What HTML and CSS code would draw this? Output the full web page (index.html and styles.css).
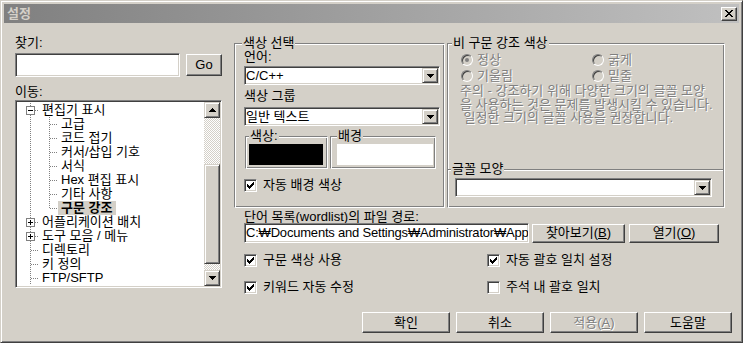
FILE: index.html
```html
<!DOCTYPE html>
<html lang="ko">
    <head>
        <meta charset="UTF-8">
        <meta name="viewport" content="width=device-width, initial-scale=1.0">
        <title>설정</title>
        <link rel="stylesheet" href="styles.css">
    </head>
    <body>
        <div class="window">

            <div class="titlebar">
                <span class="title">설정</span>
                <span class="btn-close">
                    <svg width="8" height="7" viewBox="0 0 8 7"><path d="M0 0h2v1H0z M6 0h2v1H6z M1 1h2v1H1z M5 1h2v1H5z M2 2h4v1H2z M3 3h2v1H3z M2 4h4v1H2z M1 5h2v1H1z M5 5h2v1H5z M0 6h2v1H0z M6 6h2v1H6z"/></svg>
                </span>
            </div>

            <div class="client">
                <div class="main">

                    <div class="nav">
                        <div class="caption">찾기:</div>
                        <div class="search-row">
                            <div class="edit search-box"></div>
                            <button class="btn go">Go</button>
                        </div>
                        <div class="caption nav-caption">이동:</div>
                        <div class="tree">
                            <div class="tree-items">
                                <div class="row">
                                    <span class="conn"><svg class="expander" width="9" height="9" viewBox="0 0 9 9"><rect x=".5" y=".5" width="8" height="8" fill="#fff" stroke="#808080"/><path d="M2 4h5v1H2z"/></svg></span>
                                    <span class="label">편집기 표시</span>
                                </div>
                                <div class="row"><span class="pipe"></span><span class="conn"></span><span class="label">고급</span></div>
                                <div class="row"><span class="pipe"></span><span class="conn"></span><span class="label">코드 접기</span></div>
                                <div class="row"><span class="pipe"></span><span class="conn"></span><span class="label">커서/삽입 기호</span></div>
                                <div class="row"><span class="pipe"></span><span class="conn"></span><span class="label">서식</span></div>
                                <div class="row"><span class="pipe"></span><span class="conn"></span><span class="label">Hex 편집 표시</span></div>
                                <div class="row"><span class="pipe"></span><span class="conn"></span><span class="label">기타 사항</span></div>
                                <div class="row"><span class="pipe"></span><span class="conn last"></span><span class="label selected">구문 강조</span></div>
                                <div class="row">
                                    <span class="conn"><svg class="expander" width="9" height="9" viewBox="0 0 9 9"><rect x=".5" y=".5" width="8" height="8" fill="#fff" stroke="#808080"/><path d="M2 4h5v1H2z M4 2h1v5H4z"/></svg></span>
                                    <span class="label">어플리케이션 배치</span>
                                </div>
                                <div class="row">
                                    <span class="conn"><svg class="expander" width="9" height="9" viewBox="0 0 9 9"><rect x=".5" y=".5" width="8" height="8" fill="#fff" stroke="#808080"/><path d="M2 4h5v1H2z M4 2h1v5H4z"/></svg></span>
                                    <span class="label">도구 모음 / 메뉴</span>
                                </div>
                                <div class="row"><span class="conn"></span><span class="label">디렉토리</span></div>
                                <div class="row"><span class="conn"></span><span class="label">키 정의</span></div>
                                <div class="row"><span class="conn"></span><span class="label">FTP/SFTP</span></div>
                            </div>
                            <div class="vscroll">
                                <span class="sb-btn"><svg width="7" height="4" viewBox="0 0 7 4"><path d="M3 0H4V1H5V2H6V3H7V4H0V3H1V2H2V1H3Z"/></svg></span>
                                <span class="sb-track top"></span>
                                <span class="sb-thumb"></span>
                                <span class="sb-track"></span>
                                <span class="sb-btn"><svg width="7" height="4" viewBox="0 0 7 4"><path d="M0 0H7V1H6V2H5V3H4V4H3V3H2V2H1V1H0Z"/></svg></span>
                            </div>
                        </div>
                    </div>

                    <div class="settings">
                        <div class="groups">
                            <fieldset class="group color-group">
                                <legend>색상 선택</legend>
                                <div class="caption">언어:</div>
                                <div class="combo lang">
                                    <span class="combo-text">C/C++</span>
                                    <span class="drop"><svg width="7" height="4" viewBox="0 0 7 4"><path d="M0 0H7V1H6V2H5V3H4V4H3V3H2V2H1V1H0Z"/></svg></span>
                                </div>
                                <div class="caption group-caption">색상 그룹</div>
                                <div class="combo part">
                                    <span class="combo-text">일반 텍스트</span>
                                    <span class="drop"><svg width="7" height="4" viewBox="0 0 7 4"><path d="M0 0H7V1H6V2H5V3H4V4H3V3H2V2H1V1H0Z"/></svg></span>
                                </div>
                                <div class="swatches">
                                    <fieldset class="group mini fore">
                                        <legend>색상:</legend>
                                        <div class="swatch black"></div>
                                    </fieldset>
                                    <fieldset class="group mini back">
                                        <legend>배경</legend>
                                        <div class="swatch white"></div>
                                    </fieldset>
                                </div>
                                <div class="check-item auto-bg"><span class="checkbox checked"></span>자동 배경 색상</div>
                            </fieldset>

                            <fieldset class="group style-group">
                                <legend>비 구문 강조 색상</legend>
                                <div class="radios">
                                    <div class="radio-item"><span class="radio on"></span>정상</div>
                                    <div class="radio-item"><span class="radio"></span>굵게</div>
                                    <div class="radio-item"><span class="radio"></span>기울림</div>
                                    <div class="radio-item"><span class="radio"></span>밑줄</div>
                                </div>
                                <p class="note">주의 - 강조하기 위해 다양한 크기의 글꼴 모양<br>을 사용하는 것은 문제를 발생시킬 수 있습니다.<br>&nbsp;일정한 크기의 글꼴 사용을 권장합니다.</p>
                                <fieldset class="group font-group">
                                    <legend>글꼴 모양</legend>
                                    <div class="combo font">
                                        <span class="combo-text"></span>
                                        <span class="drop"><svg width="7" height="4" viewBox="0 0 7 4"><path d="M0 0H7V1H6V2H5V3H4V4H3V3H2V2H1V1H0Z"/></svg></span>
                                    </div>
                                </fieldset>
                            </fieldset>
                        </div>

                        <div class="wordlist">
                            <div class="path-caption">단어 목록(wordlist)의 파일 경로:</div>
                            <div class="path-row">
                                <div class="edit path-edit">C:₩Documents and Settings₩Administrator₩App</div>
                                <button class="btn browse">찾아보기(<u>B</u>)</button>
                                <button class="btn open">열기(<u>O</u>)</button>
                            </div>
                        </div>

                        <div class="options">
                            <div class="check-item"><span class="checkbox checked"></span>구문 색상 사용</div>
                            <div class="check-item"><span class="checkbox checked"></span>자동 괄호 일치 설정</div>
                            <div class="check-item"><span class="checkbox checked"></span>키워드 자동 수정</div>
                            <div class="check-item"><span class="checkbox"></span>주석 내 괄호 일치</div>
                        </div>
                    </div>

                </div>

                <div class="footer">
                    <button class="btn">확인</button>
                    <button class="btn">취소</button>
                    <button class="btn disabled">적용(<u>A</u>)</button>
                    <button class="btn">도움말</button>
                </div>
            </div>

        </div>
    </body>
</html>
```

FILE: styles.css
```css
* {
    box-sizing: border-box;
}

body {
    margin: 0;
    background: #d4d0c8;
    color: #000;
    font: 13px/14px "Liberation Sans", "Noto Sans CJK KR", sans-serif;
}

/* window frame */
.window {
    width: 743px;
    height: 343px;
    display: flex;
    flex-direction: column;
    padding: 3px;
    border: 1px solid;
    border-color: #d4d0c8 #404040 #404040 #d4d0c8;
    box-shadow: inset 1px 1px #fff, inset -1px -1px #808080;
    background: #d4d0c8;
}

.titlebar {
    flex: none;
    height: 19px;
    display: flex;
    align-items: center;
    justify-content: space-between;
    padding: 0 2px 0 3px;
    background: linear-gradient(to right, #808080, #c0c0c0);
}

.title {
    font-weight: bold;
    color: #d4d0c8;
}

.btn-close {
    width: 16px;
    height: 14px;
    display: flex;
    align-items: center;
    justify-content: center;
    background: #d4d0c8;
    border: 1px solid;
    border-color: #fff #404040 #404040 #fff;
    box-shadow: inset -1px -1px #808080;
}

.btn-close svg {
    display: block;
}

/* common controls */
.btn,
.sb-btn,
.sb-thumb,
.drop {
    background: #d4d0c8;
    border: 1px solid;
    border-color: #fff #404040 #404040 #fff;
    box-shadow: inset -1px -1px #808080;
}

.sb-btn,
.sb-thumb,
.drop {
    border-color: #d4d0c8 #404040 #404040 #d4d0c8;
    box-shadow: inset 1px 1px #fff, inset -1px -1px #808080;
}

.btn {
    margin: 0;
    padding: 0;
    font: inherit;
    color: #000;
}

.btn.disabled {
    color: #808080;
    text-shadow: 1px 1px #fff;
}

.edit,
.combo,
.tree,
.checkbox {
    background: #fff;
    border: 1px solid;
    border-color: #808080 #fff #fff #808080;
    box-shadow: inset 1px 1px #404040, inset -1px -1px #d4d0c8;
}

.group {
    margin: 0;
    min-width: 0;
    border: 1px solid;
    border-color: #808080 #fff #fff #808080;
    box-shadow: inset 1px 1px #fff, inset -1px -1px #808080;
}

.group > legend {
    padding: 0 1px;
    line-height: 14px;
    background: #d4d0c8;
}

.client {
    flex: 1;
    display: flex;
    flex-direction: column;
}

.main {
    display: flex;
    gap: 12px;
    padding: 13px 0 0 11px;
}

/* left navigation */
.nav {
    flex: none;
    width: 207px;
}

.search-row {
    display: flex;
    align-items: center;
    justify-content: space-between;
    margin-top: 3px;
}

.search-box {
    width: 165px;
    height: 24px;
}

.btn.go {
    width: 36px;
    height: 22px;
}

.nav-caption {
    margin-top: 8px;
}

.tree {
    display: flex;
    height: 188px;
    margin-top: 1px;
    padding: 1px;
}

.tree-items {
    flex: 1;
    overflow: hidden;
    padding-top: 1px;
}

.row {
    display: flex;
    height: 14px;
    white-space: nowrap;
}

.pipe {
    flex: none;
    width: 19px;
    background: repeating-linear-gradient(#808080 0 1px, transparent 1px 2px) 13px 0 / 1px 14px no-repeat;
}

.conn {
    flex: none;
    width: 22px;
    padding: 3px 0 0 9px;
    background:
        repeating-linear-gradient(to right, #808080 0 1px, transparent 1px 2px) 14px 7px / 8px 1px no-repeat,
        repeating-linear-gradient(#808080 0 1px, transparent 1px 2px) 13px 0 / 1px 14px no-repeat;
}

.conn.last {
    background-size: 8px 1px, 1px 8px;
}

.expander {
    display: block;
    shape-rendering: crispEdges;
}

.label {
    padding: 0 4px 0 3px;
}

.label.selected {
    font-weight: bold;
    background: #d4d0c8;
}

.vscroll {
    flex: none;
    width: 16px;
    display: flex;
    flex-direction: column;
}

.sb-btn {
    flex: none;
    height: 16px;
    display: flex;
    align-items: center;
    justify-content: center;
}

.sb-btn svg,
.drop svg {
    display: block;
}

.sb-track {
    flex: 1;
    background: repeating-conic-gradient(#fff 0 25%, #d4d0c8 0 50%) 0 0 / 2px 2px;
}

.sb-track.top {
    flex: none;
    height: 46px;
}

.sb-thumb {
    flex: none;
    height: 100px;
}

/* right side */
.settings {
    flex: none;
    width: 491px;
}

.groups {
    display: flex;
    gap: 2px;
    height: 172px;
}

.color-group {
    width: 211px;
    padding: 0 4px 0 9px;
}

.color-group > legend {
    margin-left: -2px;
}

.combo {
    display: flex;
    align-items: center;
    height: 19px;
    padding: 1px;
}

.combo-text {
    flex: 1;
    white-space: nowrap;
}

.drop {
    flex: none;
    width: 16px;
    height: 15px;
    display: flex;
    align-items: center;
    justify-content: center;
}

.combo.lang {
    margin-top: 2px;
}

.group-caption {
    margin-top: 4px;
}

.combo.part {
    margin-top: 4px;
}

.swatches {
    display: flex;
    gap: 2px;
    margin: 3px 0 0 1px;
}

.mini.fore {
    width: 83px;
    padding: 1px 4px 3px 3px;
}

.mini.back {
    width: 106px;
    padding: 1px 2px 3px 6px;
}

.swatch {
    height: 21px;
}

.swatch.black {
    background: #000;
}

.swatch.white {
    background: #fff;
}

.check-item {
    display: flex;
    align-items: center;
    height: 14px;
    white-space: nowrap;
}

.auto-bg {
    margin-top: 9px;
}

.checkbox {
    flex: none;
    width: 13px;
    height: 13px;
    margin-right: 6px;
}

.checkbox.checked {
    background: #fff url("data:image/svg+xml,%3Csvg xmlns='http://www.w3.org/2000/svg' width='7' height='7'%3E%3Cpath d='M6 0h1v1H6z M5 1h2v1H5z M0 2h1v1H0z M4 2h3v1H4z M0 3h2v1H0z M3 3h3v1H3z M0 4h5v1H0z M1 5h3v1H1z M2 6h1v1H2z'/%3E%3C/svg%3E") 2px 2px no-repeat;
}

.style-group {
    flex: 1;
    display: flex;
    flex-direction: column;
    padding: 3px 1px 2px 13px;
}

.style-group > legend {
    margin-left: -9px;
}

.radios {
    display: grid;
    grid-template-columns: 131px auto;
    row-gap: 2px;
}

.radio-item {
    display: flex;
    align-items: center;
    gap: 4px;
    height: 14px;
    color: #808080;
    text-shadow: 1px 1px #fff;
}

.radio {
    width: 12px;
    height: 12px;
    display: flex;
    align-items: center;
    justify-content: center;
    border-radius: 50%;
    border: 1px solid;
    border-color: #808080 #fff #fff #808080;
    box-shadow: inset 1px 1px #404040, inset -1px -1px #d4d0c8;
    background: #d4d0c8;
}

.radio.on::after {
    content: "";
    width: 4px;
    height: 4px;
    border-radius: 50%;
    background: #808080;
}

.note {
    margin: 1px 0 0 -1px;
    line-height: 13.5px;
    white-space: nowrap;
    color: #808080;
    text-shadow: 1px 1px #fff;
}

.font-group {
    margin: auto 0 0 -13px;
    border-width: 1px 0 0;
    box-shadow: inset 0 1px #fff;
    padding: 2px 11px 8px 7px;
}

.font-group > legend {
    margin-left: -4px;
}

.wordlist {
    margin-top: 2px;
    padding-left: 10px;
}

.path-caption {
    line-height: 13px;
}

.path-row {
    display: flex;
    align-items: center;
}

.path-edit {
    flex: none;
    width: 285px;
    height: 20px;
    padding: 0 1px;
    line-height: 18px;
    letter-spacing: -0.2px;
    overflow: hidden;
    white-space: nowrap;
}

.btn.browse {
    width: 93px;
    height: 19px;
    margin-left: 3px;
}

.btn.open {
    width: 90px;
    height: 19px;
    margin-left: 4px;
}

.options {
    display: grid;
    grid-template-columns: 243px auto;
    row-gap: 13px;
    margin-top: 10px;
    padding-left: 10px;
}

/* dialog buttons */
.footer {
    margin-top: auto;
    display: flex;
    justify-content: flex-end;
    gap: 6px;
    padding: 0 7px 6px 0;
}

.footer .btn {
    width: 88px;
    height: 21px;
}
```
